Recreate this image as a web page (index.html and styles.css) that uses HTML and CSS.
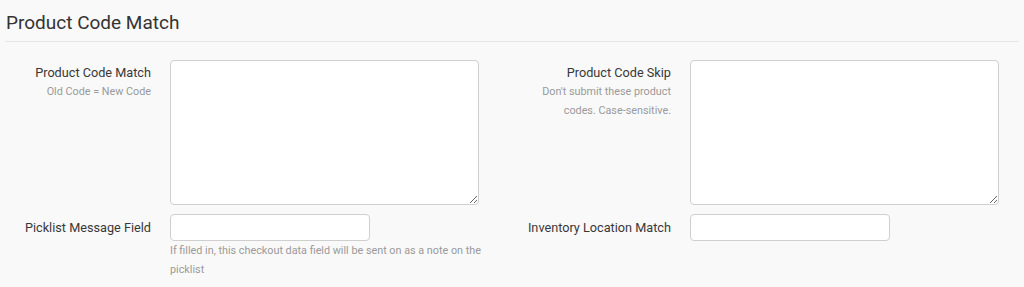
FILE: index.html
```html
<!DOCTYPE html>
<html lang="en">
<head>
<meta charset="utf-8">
<title>Product Code Match</title>
<link rel="stylesheet" href="styles.css">
</head>
<body>
<div class="page">
  <h2 class="section-title">Product Code Match</h2>
  <div class="form">
    <div class="row">
      <div class="pair">
        <div class="label-cell top">
          <label class="label">Product Code Match</label>
          <div class="help">Old Code = New Code</div>
        </div>
        <div class="field"><textarea class="textarea"></textarea></div>
      </div>
      <div class="pair">
        <div class="label-cell top">
          <label class="label">Product Code Skip</label>
          <div class="help">Don't submit these product codes. Case-sensitive.</div>
        </div>
        <div class="field"><textarea class="textarea"></textarea></div>
      </div>
    </div>
    <div class="row">
      <div class="pair">
        <div class="label-cell">
          <label class="label inline">Picklist Message Field</label>
        </div>
        <div class="field">
          <input class="input" type="text">
          <div class="field-help">If filled in, this checkout data field will be sent on as a note on the picklist</div>
        </div>
      </div>
      <div class="pair">
        <div class="label-cell">
          <label class="label inline">Inventory Location Match</label>
        </div>
        <div class="field"><input class="input" type="text"></div>
      </div>
    </div>
  </div>
</div>
</body>
</html>
```

FILE: styles.css
```css
html, body {
  margin: 0;
  padding: 0;
  background: #f9f9f9;
}

body {
  font-family: Roboto, "Liberation Sans", Arial, sans-serif;
  color: #333;
}

.page {
  width: 1024px;
}

.section-title {
  margin: 0 5px;
  padding: 12px 1px 7px;
  font-size: 19px;
  line-height: 22px;
  font-weight: 400;
  color: #333;
  border-bottom: 1px solid #e6e6e6;
}

.form {
  padding-top: 18px;
  display: flex;
  flex-direction: column;
  gap: 9px;
}

.row {
  display: grid;
  grid-template-columns: 520px 1fr;
}

.pair {
  display: grid;
  grid-template-columns: 151px 320px;
  column-gap: 19px;
  align-items: start;
}

.label-cell {
  text-align: right;
}

.label-cell.top {
  padding-top: 4px;
}

.label {
  display: block;
  font-size: 12.7px;
  line-height: 18px;
  color: #383838;
}

.label.inline {
  line-height: 27px;
  white-space: nowrap;
}

.help {
  font-size: 10.8px;
  line-height: 19px;
  color: #9a9a9a;
}

.field {
  display: flex;
  flex-direction: column;
}

.textarea {
  box-sizing: border-box;
  width: 309px;
  height: 145px;
  margin: 0;
  border: 1px solid #cfcfcf;
  border-radius: 4px;
  background: #fff;
  font: inherit;
  display: block;
}

.input {
  box-sizing: border-box;
  width: 200px;
  height: 27px;
  margin: 0;
  border: 1px solid #cfcfcf;
  border-radius: 4px;
  background: #fff;
  font: inherit;
  display: block;
}

.field-help {
  font-size: 10.8px;
  line-height: 19px;
  color: #9a9a9a;
}
```
